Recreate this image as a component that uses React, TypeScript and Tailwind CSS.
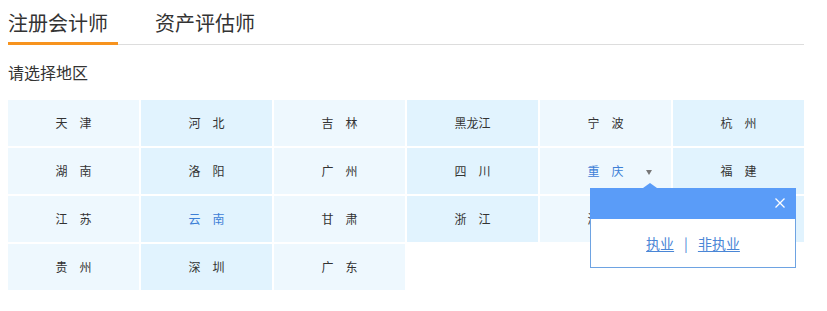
import React from "react";

const rows: string[][] = [
  ["天　津", "河　北", "吉　林", "黑龙江", "宁　波", "杭　州"],
  ["湖　南", "洛　阳", "广　州", "四　川", "重　庆", "福　建"],
  ["江　苏", "云　南", "甘　肃", "浙　江", "湖　北", "山　东"],
  ["贵　州", "深　圳", "广　东"],
];

export default function App() {
  return (
    <div
      className="w-[827px] h-[311px] bg-white pl-[8px] pr-[23px] text-[#333]"
      style={{ fontFamily: '"Noto Sans CJK SC", "Noto Sans", sans-serif' }}
    >
      <div className="flex items-end border-b border-[#dddddd]">
        <div className="w-[110px] pt-[9px] pb-[5px] -mb-px border-b-[3px] border-[#f7931e] text-[20px] leading-[28px] text-[#333]">
          注册会计师
        </div>
        <div className="ml-[37px] pt-[9px] pb-[7px] text-[20px] leading-[28px] text-[#333]">
          资产评估师
        </div>
      </div>
      <div className="mt-[17px] text-[16px] leading-[20px] text-[#333]">请选择地区</div>
      <div className="mt-[18px] grid grid-cols-[repeat(6,131px)] auto-rows-[46px] gap-[2px]">
        {rows.flatMap((r, ri) =>
          r.map((name, ci) => {
            const bg = ci % 2 === 0 ? "bg-[#eef8fe]" : "bg-[#e1f3fe]";
            const blue = (ri === 2 && ci === 1) || (ri === 1 && ci === 4);
            const isActive = ri === 1 && ci === 4;
            return (
              <div
                key={`${ri}-${ci}`}
                className={`relative flex items-center justify-center text-[12px] ${bg} ${
                  blue ? "text-[#3d80d6]" : "text-[#333]"
                } ${isActive ? "z-10" : ""}`}
              >
                <span className="whitespace-pre">{name}</span>
                {isActive && (
                  <>
                    <span className="absolute left-[106px] top-[22px] w-0 h-0 border-l-[3px] border-r-[3px] border-t-[5px] border-l-transparent border-r-transparent border-t-[#777]" />
                    <div className="absolute left-[50px] top-[40px] w-[206px]">
                      <span className="absolute left-[53px] top-[-5px] w-0 h-0 border-l-[7px] border-r-[7px] border-b-[5px] border-l-transparent border-r-transparent border-b-[#5a9cf8]" />
                      <div className="relative h-[31px] bg-[#5a9cf8]">
                        <svg
                          className="absolute left-[185px] top-[10px]"
                          width="10"
                          height="10"
                          viewBox="0 0 10 10"
                        >
                          <path d="M0.5 0.5 L9.5 9.5 M9.5 0.5 L0.5 9.5" stroke="#fff" strokeWidth="1.3" />
                        </svg>
                      </div>
                      <div className="h-[49px] bg-white border border-t-0 border-[#6ea3e2] flex items-center justify-center text-[14px] text-[#4a86d6]">
                        <span className="underline underline-offset-[2px]">执业</span>
                        <span className="mx-[10px]">|</span>
                        <span className="underline underline-offset-[2px]">非执业</span>
                      </div>
                    </div>
                  </>
                )}
              </div>
            );
          })
        )}
      </div>
    </div>
  );
}
